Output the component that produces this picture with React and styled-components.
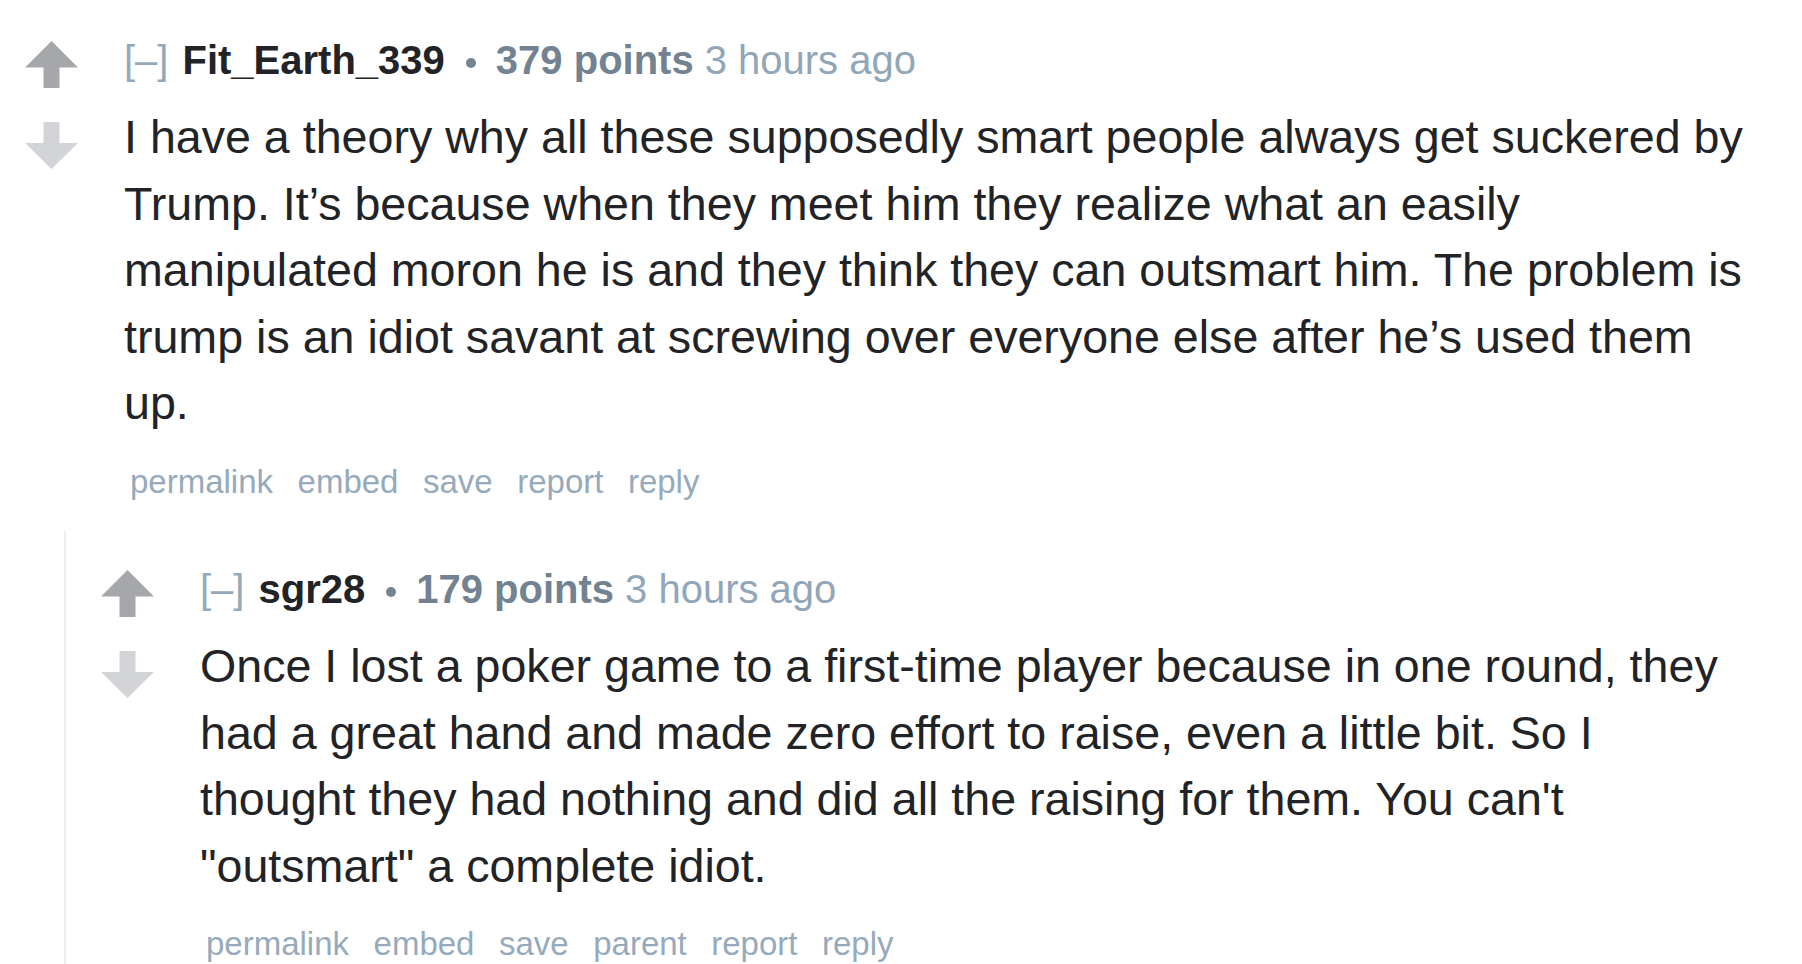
import React from 'react';
import styled, { createGlobalStyle } from 'styled-components';

const GlobalStyle = createGlobalStyle`
  html, body {
    margin: 0;
    padding: 0;
    background: #fff;
    overflow: hidden;
  }
  body {
    font-family: "Liberation Sans", Arial, sans-serif;
  }
`;

const Page = styled.div`
  padding: 36px 57px 0 25px;
`;

const CommentRow = styled.div`
  display: flex;
  align-items: flex-start;
`;

const Votes = styled.div`
  width: 53px;
  flex: none;
  margin-right: 46px;
  padding-top: 5px;
  display: flex;
  flex-direction: column;
  gap: 34px;
`;

const ArrowSvg = styled.svg`
  display: block;
  width: 53px;
  height: 47px;
  fill: ${p => (p.$down ? '#d3d4d8' : '#a6a7aa')};
`;

const Entry = styled.div`
  flex: 1;
  min-width: 0;
`;

const Tagline = styled.div`
  font-size: 40px;
  line-height: 48px;
  white-space: nowrap;
`;

const Collapse = styled.span`
  color: #93a8ba;
  margin-right: 14px;
`;

const Author = styled.span`
  font-weight: bold;
  color: #222326;
`;

const Bullet = styled.span`
  display: inline-block;
  width: 10px;
  height: 10px;
  border-radius: 50%;
  background: #76848f;
  margin: 0 20px 0 21px;
  vertical-align: 6px;
`;

const Score = styled.span`
  font-weight: bold;
  color: #728290;
  margin-right: 11px;
`;

const Time = styled.span`
  color: #91a6b8;
`;

const Body = styled.p`
  margin: 20px 0 0;
  font-size: 46.6px;
  line-height: 66.6px;
  color: #222326;
`;

const Buttons = styled.ul`
  list-style: none;
  margin: 25px 0 0;
  padding: 0 0 0 6px;
  display: flex;
  gap: 24.5px;
  font-size: 33px;
  line-height: 40px;
  color: #96aabc;
`;

const Child = styled.div`
  margin: 29px 0 0 39px;
  padding: 34px 0 0 35px;
  border-left: 2px solid #eceef0;
`;

function Arrow({ down }) {
  return (
    <ArrowSvg $down={down} viewBox="0 0 53 47">
      {down ? (
        <path d="M18.5 0h16v21h18.5L26.5 47 0 21h18.5z" />
      ) : (
        <path d="M26.5 0L53 26.5H34.5V47h-16V26.5H0z" />
      )}
    </ArrowSvg>
  );
}

function Comment({ author, points, time, text, actions }) {
  return (
    <CommentRow>
      <Votes>
        <Arrow />
        <Arrow down />
      </Votes>
      <Entry>
        <Tagline>
          <Collapse>[–]</Collapse>
          <Author>{author}</Author>
          <Bullet />
          <Score>{points} points</Score>
          <Time>{time}</Time>
        </Tagline>
        <Body>{text}</Body>
        <Buttons>
          {actions.map(a => (
            <li key={a}>{a}</li>
          ))}
        </Buttons>
      </Entry>
    </CommentRow>
  );
}

export default function App() {
  return (
    <>
      <GlobalStyle />
      <Page>
        <Comment
          author="Fit_Earth_339"
          points={379}
          time="3 hours ago"
          text="I have a theory why all these supposedly smart people always get suckered by Trump. It’s because when they meet him they realize what an easily manipulated moron he is and they think they can outsmart him. The problem is trump is an idiot savant at screwing over everyone else after he’s used them up."
          actions={['permalink', 'embed', 'save', 'report', 'reply']}
        />
        <Child>
          <Comment
            author="sgr28"
            points={179}
            time="3 hours ago"
            text={'Once I lost a poker game to a first-time player because in one round, they had a great hand and made zero effort to raise, even a little bit. So I thought they had nothing and did all the raising for them. You can\'t "outsmart" a complete idiot.'}
            actions={['permalink', 'embed', 'save', 'parent', 'report', 'reply']}
          />
        </Child>
      </Page>
    </>
  );
}
